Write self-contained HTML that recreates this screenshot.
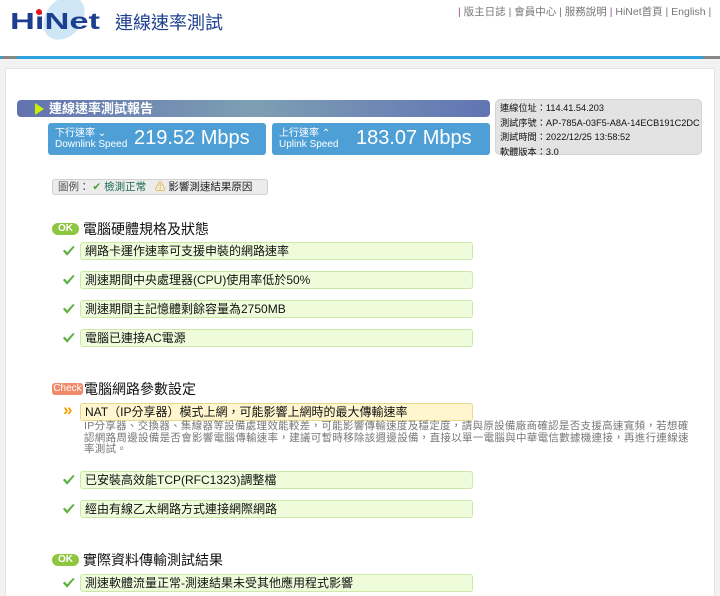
<!DOCTYPE html>
<html><head><meta charset="utf-8"><style>
*{margin:0;padding:0;box-sizing:border-box}
html,body{width:720px;height:596px;overflow:hidden}
body{background:#fff;font-family:"Liberation Sans","Noto Sans CJK TC",sans-serif;position:relative}
.a{position:absolute}
.item{position:absolute;left:80px;width:393px;height:18px;background:#effcdc;border:1px solid #cde9a6;border-radius:3px;font-size:12px;line-height:16px;padding-left:4px;color:#111}
.chk{position:absolute;left:62px;width:13px;height:13px}
.h{position:absolute;left:83px;font-size:14px;color:#111;line-height:16px}
.ok{position:absolute;left:52px;width:27px;height:12px;background:#8dc63f;border-radius:6px;color:#fff;font-size:10px;line-height:12px;text-align:center;font-weight:bold}
</style></head><body>
<svg class="a" style="left:0;top:0" width="110" height="50">
<ellipse cx="64" cy="18" rx="18" ry="24" fill="#cfe6f7" transform="rotate(40 64 18)"/>
<text x="10" y="29" font-family="Liberation Sans" font-weight="bold" font-size="23" fill="#1d3f8f" textLength="90" lengthAdjust="spacingAndGlyphs">HiNet</text>
<circle cx="39" cy="12" r="3" fill="#e8141c"/>
</svg>
<div class="a" style="left:115px;top:9px;font-size:18px;color:#1d3f8f">連線速率測試</div>
<div class="a" style="left:458px;top:4px;font-size:10.5px;color:#777;white-space:nowrap"><span style="color:#a0508a">|</span> 版主日誌 | 會員中心 | 服務說明 <span style="color:#a0508a">|</span> HiNet首頁 | English |</div>
<div class="a" style="left:0;top:56px;width:720px;height:3px;background:#2fa3dd"></div>
<div class="a" style="left:2px;top:56px;width:15px;height:3px;background:#888"></div>
<div class="a" style="left:703px;top:56px;width:17px;height:3px;background:#888"></div>
<div class="a" style="left:0;top:59px;width:720px;height:537px;background:#f2f2f2"></div>
<div class="a" style="left:5px;top:68px;width:710px;height:540px;background:#fff;border:1px solid #e4e4e4"></div>
<div class="a" style="left:17px;top:100px;width:473px;height:17px;border-radius:4px;background:linear-gradient(90deg,#6272b0,#7d9fb3 50%,#6274b4);color:#fff;font-size:13px;font-weight:bold;line-height:17px;padding-left:32px">連線速率測試報告</div>
<div class="a" style="left:35px;top:103px;width:0;height:0;border-left:9px solid #c8f000;border-top:6px solid transparent;border-bottom:6px solid transparent"></div>
<div class="a" style="left:48px;top:123px;width:218px;height:32px;background:#4e9fd6;border-radius:3px;color:#fff">
<div class="a" style="left:7px;top:5px;font-size:10px;line-height:11px">下行速率 ⌄<br>Downlink Speed</div>
<div class="a" style="left:86px;top:4px;font-size:20px">219.52 Mbps</div></div>
<div class="a" style="left:272px;top:123px;width:218px;height:32px;background:#4e9fd6;border-radius:3px;color:#fff">
<div class="a" style="left:7px;top:5px;font-size:10px;line-height:11px">上行速率 ⌃<br>Uplink Speed</div>
<div class="a" style="left:84px;top:4px;font-size:20px">183.07 Mbps</div></div>
<div class="a" style="left:495px;top:99px;width:207px;height:56px;background:#e3e3e3;border-radius:5px;border:1px solid #d4d4d4;font-size:9.2px;line-height:14.5px;padding:1px 0 0 4px;color:#111;white-space:nowrap">連線位址：114.41.54.203<br>測試序號：AP-785A-03F5-A8A-14ECB191C2DC<br>測試時間：2022/12/25 13:58:52<br>軟體版本：3.0</div>
<div class="a" style="left:52px;top:179px;width:216px;height:16px;background:#ececec;border:1px solid #d0d0d0;border-radius:3px;font-size:10.5px;line-height:14px;padding-left:5px;color:#555;white-space:nowrap">圖例： <span style="color:#4aa030">✔</span> <span style="color:#1a6a50">檢測正常</span> &nbsp; <span style="color:#e8a000">⚠</span> <span style="color:#222">影響測速結果原因</span></div>

<div class="ok" style="top:223px">OK</div><div class="h" style="top:221px">電腦硬體規格及狀態</div>
<svg class="chk" style="top:244px" viewBox="0 0 14 14"><path d="M1 7.5l2-1.5 2.5 3L12 2l1.5 1.2-8 9.5z" fill="#5cb040"/></svg><div class="item" style="top:242px">網路卡運作速率可支援申裝的網路速率</div>
<svg class="chk" style="top:273px" viewBox="0 0 14 14"><path d="M1 7.5l2-1.5 2.5 3L12 2l1.5 1.2-8 9.5z" fill="#5cb040"/></svg><div class="item" style="top:271px">測速期間中央處理器(CPU)使用率低於50%</div>
<svg class="chk" style="top:302px" viewBox="0 0 14 14"><path d="M1 7.5l2-1.5 2.5 3L12 2l1.5 1.2-8 9.5z" fill="#5cb040"/></svg><div class="item" style="top:300px">測速期間主記憶體剩餘容量為2750MB</div>
<svg class="chk" style="top:331px" viewBox="0 0 14 14"><path d="M1 7.5l2-1.5 2.5 3L12 2l1.5 1.2-8 9.5z" fill="#5cb040"/></svg><div class="item" style="top:329px">電腦已連接AC電源</div>

<div class="ok" style="top:383px;left:52px;width:31px;background:#f08a6a;border-radius:3px;font-weight:normal">Check</div><div class="h" style="top:381px;left:84px">電腦網路參數設定</div>
<div class="a" style="left:63px;top:401px;color:#f0a000;font-size:17px;font-weight:bold;line-height:18px">»</div>
<div class="item" style="top:403px;background:#fff6cf;border-color:#e8d88e">NAT（IP分享器）模式上網，可能影響上網時的最大傳輸速率</div>
<div class="a" style="left:84px;top:421px;width:612px;font-size:10.5px;line-height:11.5px;color:#777;letter-spacing:0.3px">IP分享器、交換器、集線器等設備處理效能較差，可能影響傳輸速度及穩定度，請與原設備廠商確認是否支援高速寬頻，若想確認網路周邊設備是否會影響電腦傳輸速率，建議可暫時移除該週邊設備，直接以單一電腦與中華電信數據機連接，再進行連線速率測試。</div>
<svg class="chk" style="top:473px" viewBox="0 0 14 14"><path d="M1 7.5l2-1.5 2.5 3L12 2l1.5 1.2-8 9.5z" fill="#5cb040"/></svg><div class="item" style="top:471px">已安裝高效能TCP(RFC1323)調整檔</div>
<svg class="chk" style="top:502px" viewBox="0 0 14 14"><path d="M1 7.5l2-1.5 2.5 3L12 2l1.5 1.2-8 9.5z" fill="#5cb040"/></svg><div class="item" style="top:500px">經由有線乙太網路方式連接網際網路</div>

<div class="ok" style="top:554px">OK</div><div class="h" style="top:552px">實際資料傳輸測試結果</div>
<svg class="chk" style="top:576px" viewBox="0 0 14 14"><path d="M1 7.5l2-1.5 2.5 3L12 2l1.5 1.2-8 9.5z" fill="#5cb040"/></svg><div class="item" style="top:574px">測速軟體流量正常-測速結果未受其他應用程式影響</div>
</body></html>
